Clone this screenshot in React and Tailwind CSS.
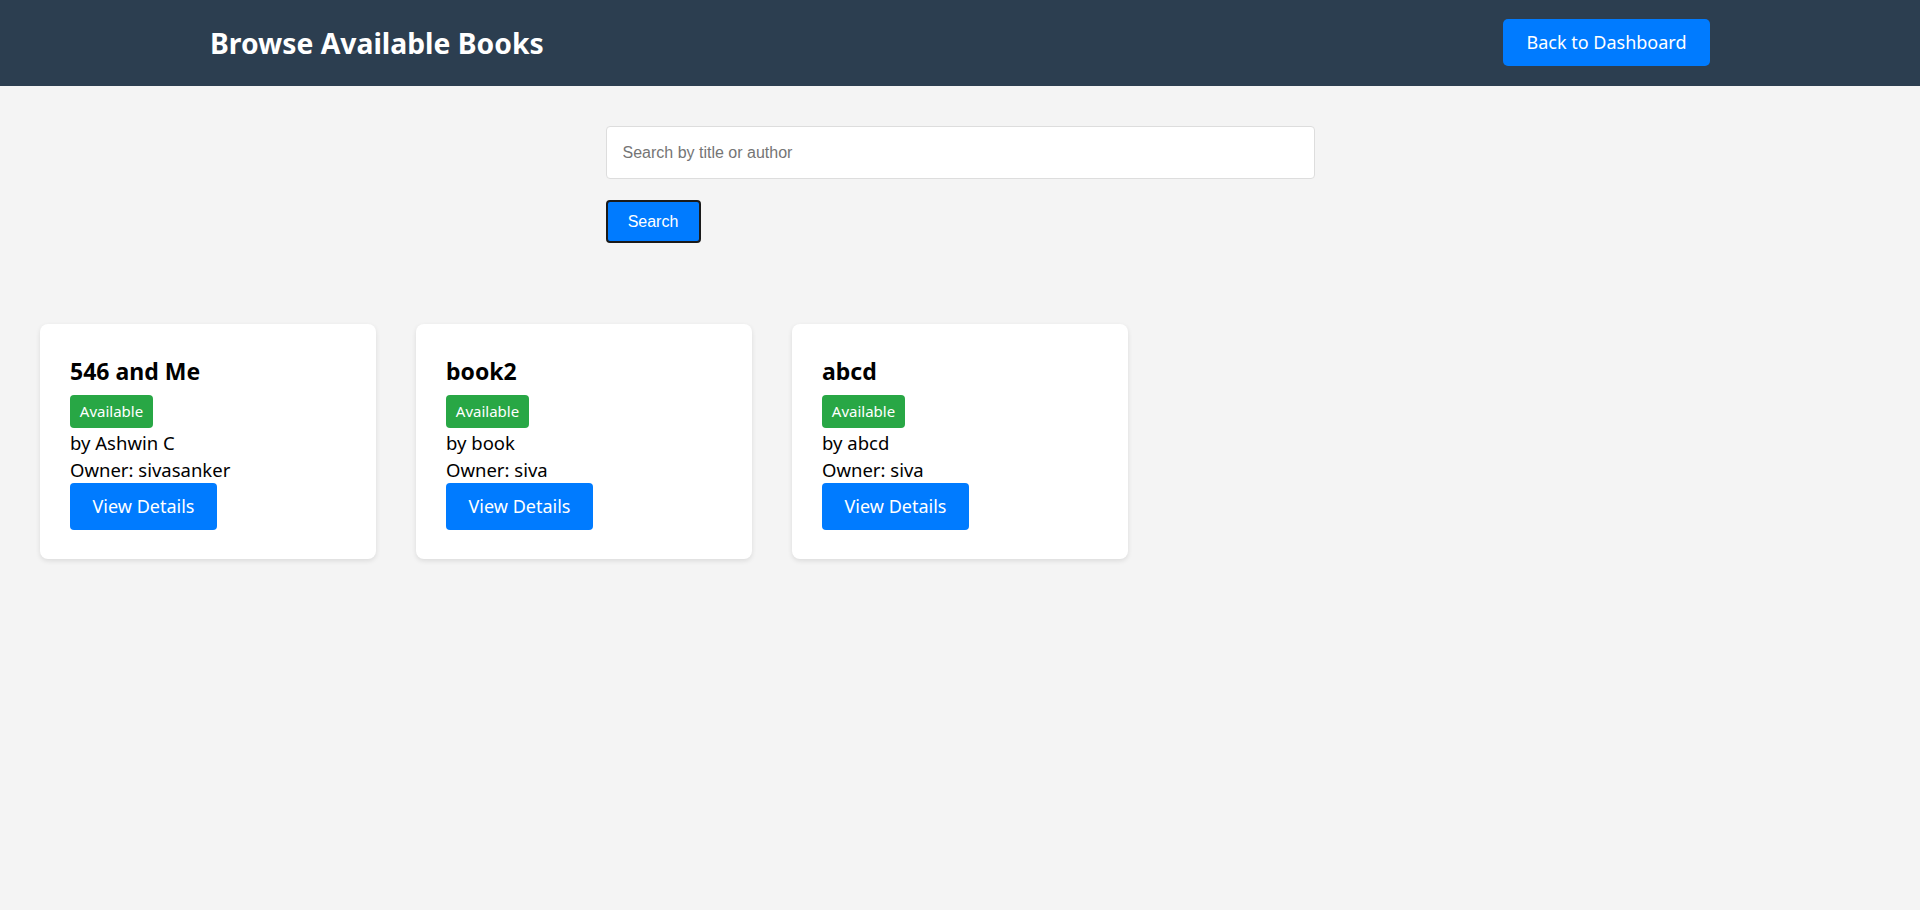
import React from "react";

const books = [
  { title: "546 and Me", author: "Ashwin C", owner: "sivasanker" },
  { title: "book2", author: "book", owner: "siva" },
  { title: "abcd", author: "abcd", owner: "siva" },
];

export default function App() {
  return (
    <div className="min-h-[910px] bg-[#f4f4f4] text-black" style={{ fontFamily: '"Noto Sans", "Open Sans", sans-serif' }}>
      <header className="h-[86px] bg-[#2c3e50]">
        <div className="mx-auto flex h-full w-[1500px] items-center justify-between">
          <h1 className="text-[28.3px] font-bold leading-none text-white">Browse Available Books</h1>
          <button className="mt-[-1px] h-[47px] w-[207px] rounded-[5px] bg-[#007bff] text-[18px] text-white">
            Back to Dashboard
          </button>
        </div>
      </header>

      <div className="mx-auto mt-[40px] flex w-[709px] flex-col items-start" style={{ fontFamily: '"Liberation Sans", Arial, sans-serif' }}>
        <input
          type="text"
          placeholder="Search by title or author"
          className="h-[53px] w-full rounded-[4px] border border-[#dddddd] bg-white px-[16px] text-[16px] text-black outline-none placeholder:text-[#757575]"
        />
        <button className="mt-[21px] h-[43px] w-[95px] rounded-[4px] border-2 border-[#1a1a1a] bg-[#007bff] text-[16px] text-white">
          Search
        </button>
      </div>

      <div className="mt-[81px] flex gap-[40px] px-[40px]">
        {books.map((b) => (
          <div
            key={b.title}
            className="flex w-[336px] flex-col items-start rounded-[8px] bg-white px-[30px] pb-[29px] pt-[32px] shadow-[0_2px_5px_rgba(0,0,0,0.1)]"
          >
            <h3 className="text-[23px] font-bold leading-[30px]">{b.title}</h3>
            <span className="mt-[9px] flex h-[33px] w-[83px] items-center justify-center rounded-[4px] bg-[#28a745] text-[15px] text-white">
              Available
            </span>
            <p className="mt-[1px] text-[18.5px] leading-[27px]">by {b.author}</p>
            <p className="text-[18.5px] leading-[27px]">Owner: {b.owner}</p>
            <button className="h-[47px] w-[147px] rounded-[4px] bg-[#007bff] text-[18px] text-white">
              View Details
            </button>
          </div>
        ))}
      </div>
    </div>
  );
}
